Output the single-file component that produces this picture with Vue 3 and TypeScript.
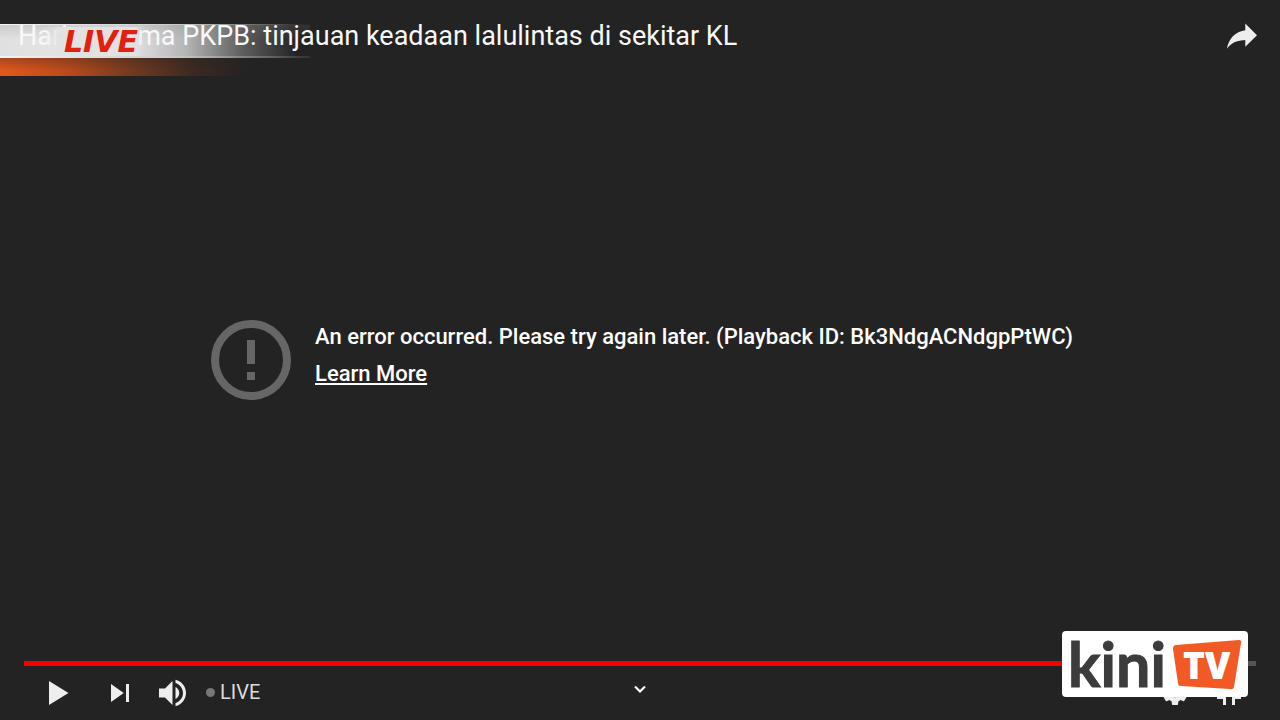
<script setup lang="ts">
import { ref } from 'vue'

const title = 'Hari pertama PKPB: tinjauan keadaan lalulintas di sekitar KL'
const playbackId = 'Bk3NdgACNdgpPtWC'
const progress = ref(97)
</script>

<template>
  <div class="player">
    <div class="banner" aria-hidden="true">
      <div class="strip silver"></div>
      <div class="strip orange"></div>
    </div>

    <header class="top">
      <h1 class="title">{{ title }}</h1>
      <button class="btn" type="button" aria-label="Share">
        <svg viewBox="0 0 36 36"><path d="m 20.20,14.19 0,-4.45 7.79,7.79 -7.79,7.62 0,-4.56 C 16.27,20.69 12.10,21.81 9.34,24.76 8.80,25.13 7.60,27.29 8.12,25.65 9.08,21.32 11.80,17.18 15.98,15.38 c 1.33,-0.60 2.76,-0.98 4.21,-1.19 z" /></svg>
      </button>
    </header>

    <div class="live-tag">LIVE</div>

    <main class="error">
      <svg class="error-icon" viewBox="0 0 80 80" aria-hidden="true">
        <circle cx="40" cy="40" r="36" fill="none" stroke="#666" stroke-width="8" />
        <path fill="#666" d="M36 20h8v24h-8zM36 52h8v8h-8z" />
      </svg>
      <div class="error-text">
        <p>An error occurred. Please try again later. (Playback ID: {{ playbackId }})</p>
        <p><a href="#">Learn More</a></p>
      </div>
    </main>

    <footer class="bottom">
      <div class="track"><div class="played" :style="{ width: progress + '%' }"></div></div>
      <div class="controls">
        <div class="group left">
          <button class="btn play" type="button" aria-label="Play">
            <svg viewBox="0 0 36 36"><path d="M12 10 25 18 12 26z" /></svg>
          </button>
          <button class="btn" type="button" aria-label="Next">
            <svg viewBox="0 0 36 36"><path d="M12 24 20.5 18 12 12zM22 12v12h2V12z" /></svg>
          </button>
          <button class="btn" type="button" aria-label="Mute">
            <svg viewBox="0 0 36 36"><path d="M8 21h4l5 5V10l-5 5H8zM19 14v8c1.48-.68 2.5-2.23 2.5-4s-1.02-3.26-2.5-4zM19 11.29c2.89.86 5 3.54 5 6.71s-2.11 5.85-5 6.71v2.06c4.01-.91 7-4.49 7-8.77s-2.99-7.86-7-8.77z" /></svg>
          </button>
          <button class="live" type="button"><span class="dot"></span>LIVE</button>
        </div>
        <button class="btn more" type="button" aria-label="More">
          <svg viewBox="0 0 16 16"><path d="M3 5.5 8 10.5 13 5.5" fill="none" stroke="#fff" stroke-width="2.2" /></svg>
        </button>
        <div class="group right">
          <button class="btn" type="button" aria-label="Settings">
            <svg viewBox="0 0 36 36"><path fill-rule="evenodd" d="m 23.94,18.78 c .03,-0.25 .05,-0.51 .05,-0.78 0,-0.27 -0.02,-0.52 -0.05,-0.78 l 1.68,-1.32 c .15,-0.12 .19,-0.33 .09,-0.51 l -1.6,-2.76 c -0.09,-0.17 -0.31,-0.24 -0.48,-0.17 l -1.99,.8 c -0.41,-0.32 -0.86,-0.58 -1.35,-0.78 l -0.30,-2.12 c -0.02,-0.19 -0.19,-0.33 -0.39,-0.33 l -3.2,0 c -0.2,0 -0.36,.14 -0.39,.33 l -0.30,2.12 c -0.48,.2 -0.93,.47 -1.35,.78 l -1.99,-0.8 c -0.18,-0.07 -0.39,0 -0.48,.17 l -1.6,2.76 c -0.10,.17 -0.05,.39 .09,.51 l 1.68,1.32 c -0.03,.25 -0.05,.52 -0.05,.78 0,.26 .02,.52 .05,.78 l -1.68,1.32 c -0.15,.12 -0.19,.33 -0.09,.51 l 1.6,2.76 c .09,.17 .31,.24 .48,.17 l 1.99,-0.8 c .41,.32 .86,.58 1.35,.78 l .30,2.12 c .02,.19 .19,.33 .39,.33 l 3.2,0 c .2,0 .36,-0.14 .39,-0.33 l .30,-2.12 c .48,-0.2 .93,-0.47 1.35,-0.78 l 1.99,.8 c .18,.07 .39,0 .48,-0.17 l 1.6,-2.76 c .09,-0.17 .05,-0.39 -0.09,-0.51 z M18 20.8a2.8 2.8 0 1 1 0-5.6 2.8 2.8 0 0 1 0 5.6z" /></svg>
          </button>
          <button class="btn" type="button" aria-label="Exit full screen">
            <svg viewBox="0 0 36 36"><path d="M14 14h-4v2h6v-6h-2zM22 14v-4h-2v6h6v-2zM20 26h2v-4h4v-2h-6zM10 22h4v4h2v-6h-6z" /></svg>
          </button>
        </div>
      </div>
    </footer>

    <div class="logo">
      <svg viewBox="0 0 186 66" role="img" aria-label="kini TV">
        <text class="kini" x="6" y="56">kini</text>
        <path fill="#f15a24" d="M114 14 177 9Q180 9 179 12L172 56Q171 59 168 58L119 55Q116 55 116 52L111 18Q111 14 114 14z" />
        <text class="tv" x="121" y="48">TV</text>
      </svg>
    </div>
  </div>
</template>

<style>
body {
  margin: 0;
  background: #232323;
}
</style>

<style scoped>
.player {
  position: relative;
  display: flex;
  flex-direction: column;
  min-height: 100vh;
  overflow: hidden;
  background: #232323;
  color: #fff;
  font-family: Roboto, "Liberation Sans", sans-serif;
}
.banner {
  position: absolute;
  top: 24px;
  left: 0;
  width: 310px;
}
.silver {
  height: 31px;
  border-top: 1px solid;
  border-bottom: 2px solid;
  border-image: linear-gradient(90deg, #f4f4f4, #d0d0d0 50%, rgba(160, 160, 160, 0.5) 78%, transparent) 1;
  background:
    linear-gradient(180deg, rgba(120, 120, 120, 0.2), transparent 45%),
    linear-gradient(90deg, #e0e0e0, #e6e6e6 30%, #dcdcdc 45%, #b5b5b5 60%, rgba(120, 120, 120, 0.7) 78%, transparent 96%);
}
.orange {
  height: 18px;
  background:
    linear-gradient(180deg, rgba(35, 35, 35, 0.3), transparent 70%),
    linear-gradient(90deg, #e3581c, #b94a1b 22%, #743a20 42%, #3c2a20 62%, transparent 80%);
}
.top {
  position: relative;
  display: flex;
  align-items: center;
  justify-content: space-between;
  height: 54px;
  padding: 9px 11px 0 18px;
}
.title {
  margin: 0;
  font-size: 27px;
  line-height: 54px;
  font-weight: 400;
  color: #f8f8f8;
  white-space: nowrap;
}
.live-tag {
  position: absolute;
  top: 27px;
  left: 44px;
  box-sizing: border-box;
  width: 98px;
  padding-left: 20px;
  background: linear-gradient(90deg, transparent, #e2e2e2 18%, #e2e2e2 94%, transparent);
  color: #e2200f;
  font: italic 700 30px/29px "DejaVu Sans", sans-serif;
}
.btn {
  width: 54px;
  height: 54px;
  padding: 0;
  border: 0;
  background: none;
  cursor: pointer;
}
.btn svg {
  display: block;
  width: 100%;
  height: 100%;
  fill: #eee;
}
.error {
  display: flex;
  flex: 1;
  align-items: center;
  justify-content: center;
  gap: 24px;
  padding: 0 0 4px 4px;
}
.error-icon {
  width: 80px;
  height: 80px;
}
.error-text {
  padding-bottom: 10px;
  font-size: 22px;
  font-weight: 500;
  line-height: 37px;
}
.error-text p {
  margin: 0;
}
.error-text a {
  color: #fff;
  text-decoration-thickness: 2px;
  text-underline-offset: 2px;
}
.bottom {
  padding: 0 24px;
}
.track {
  height: 5px;
  background: #555;
}
.played {
  height: 100%;
  background: #f60000;
}
.controls {
  display: grid;
  grid-template-columns: 1fr auto 1fr;
  align-items: center;
  height: 54px;
}
.group {
  display: flex;
  align-items: center;
}
.left {
  padding-left: 7px;
}
.right {
  justify-content: flex-end;
}
.play {
  margin-right: 8px;
}
.live {
  display: flex;
  align-items: center;
  gap: 5px;
  padding: 0 0 2px 5px;
  border: 0;
  background: none;
  color: #ddd;
  font: 400 20px/52px Roboto, sans-serif;
  cursor: pointer;
}
.dot {
  width: 9px;
  height: 9px;
  border-radius: 50%;
  background: #777;
}
.more {
  width: 16px;
  height: 16px;
  margin-bottom: 8px;
}
.logo {
  position: absolute;
  right: 32px;
  bottom: 23px;
  width: 186px;
  height: 66px;
  border-radius: 4px;
  background: #fff;
}
.logo svg {
  display: block;
  overflow: visible;
}
.kini {
  fill: #3c3c3c;
  stroke: #3c3c3c;
  stroke-width: 1px;
  font: 700 61px Lato, sans-serif;
}
.tv {
  fill: #fff;
  font: 800 37px "Open Sans", sans-serif;
}
</style>
